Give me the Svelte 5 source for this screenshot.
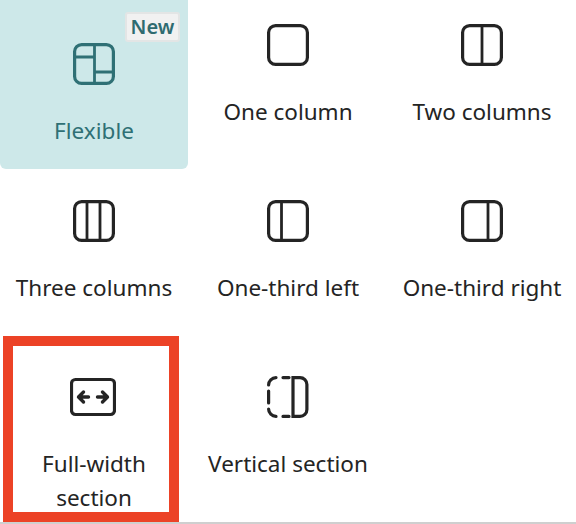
<script>
	const layouts = [
		{ id: 'flexible', label: 'Flexible', active: true },
		{ id: 'one', label: 'One column' },
		{ id: 'two', label: 'Two columns' },
		{ id: 'three', label: 'Three columns' },
		{ id: 'left', label: 'One-third left' },
		{ id: 'right', label: 'One-third right' },
		{ id: 'full', label: 'Full-width section' },
		{ id: 'vertical', label: 'Vertical section' }
	];
</script>

<div class="picker">
	<div class="grid">
		{#each layouts as item}
			<div class="tile" class:active={item.active}>
				{#if item.active}
					<span class="badge">New</span>
				{/if}
				{#if item.id === 'full'}
					<svg class="icon wide" width="46" height="42" viewBox="0 0 46 42">
						<rect x="1.5" y="3.5" width="43" height="35" rx="4" />
						<path class="arrow" d="M18.5 21H8.5M13.5 16L8.5 21l5 5M27.5 21h10M32.5 16L37.5 21l-5 5" />
					</svg>
				{:else if item.id === 'vertical'}
					<svg class="icon" width="42" height="42" viewBox="0 0 42 42">
						<path class="solid" d="M26 1.6H33a6.9 6.9 0 0 1 6.9 6.9v25a6.9 6.9 0 0 1-6.9 6.9h-7z" />
						<path
							class="dash"
							d="M9 1.6A7.4 7.4 0 0 0 1.6 9M1.6 15v12M1.6 33A7.4 7.4 0 0 0 9 40.4M16 1.6h6M16 40.4h6"
						/>
					</svg>
				{:else}
					<svg class="icon" width="42" height="42" viewBox="0 0 42 42">
						<rect x="1.6" y="1.6" width="38.8" height="38.8" rx="7" />
						{#if item.id === 'flexible'}
							<path d="M21.5 1.6v38.8M1.6 14h20M21.5 29h18.9" />
						{:else if item.id === 'two'}
							<path d="M21 1.6v38.8" />
						{:else if item.id === 'three'}
							<path d="M14 1.6v38.8M27 1.6v38.8" />
						{:else if item.id === 'left'}
							<path d="M14.5 1.6v38.8" />
						{:else if item.id === 'right'}
							<path d="M27 1.6v38.8" />
						{/if}
					</svg>
				{/if}
				<span class="label">{item.label}</span>
			</div>
		{/each}
	</div>
	<!-- red annotation drawn over the tile -->
	<div class="highlight"></div>
</div>

<style>
	:global(body) {
		margin: 0;
		background: #fff;
	}

	.picker {
		position: relative;
		width: 576px;
		height: 524px;
		box-sizing: border-box;
		border-bottom: 2px solid #cfcfcf;
		overflow: hidden;
		font-family: 'Noto Sans', 'Open Sans', sans-serif;
	}

	.grid {
		display: grid;
		grid-template-columns: repeat(3, 188px);
		grid-auto-rows: 169px;
		column-gap: 6px;
		row-gap: 7px;
	}

	.tile {
		position: relative;
		display: flex;
		flex-direction: column;
		align-items: center;
		box-sizing: border-box;
		padding-top: 24px;
		color: #242424;
		border-radius: 0 0 6px 6px;
	}

	.tile.active {
		padding-top: 43px;
		color: #2f7075;
		background: #cde8e9;
	}

	.badge {
		position: absolute;
		top: 12px;
		right: 8px;
		width: 55px;
		height: 30px;
		box-sizing: border-box;
		text-align: center;
		font-size: 20px;
		font-weight: 600;
		line-height: 26px;
		color: #2f6b70;
		background: #f1f1f1;
		border: 2px solid #e3e5e5;
		border-radius: 3px;
	}

	.icon {
		display: block;
		fill: none;
		stroke: currentColor;
		stroke-width: 3.2;
	}

	.icon.wide {
		margin-left: -2px;
	}

	.icon path {
		stroke-width: 2.8;
	}

	.icon .solid {
		stroke-width: 3.2;
	}

	.icon .arrow {
		stroke-width: 3.4;
		stroke-linecap: round;
		stroke-linejoin: round;
	}

	.icon .dash {
		stroke-width: 3.2;
		stroke-linecap: round;
	}

	.label {
		margin-top: 29px;
		width: 170px;
		text-align: center;
		font-size: 22.5px;
		line-height: 34px;
	}

	.highlight {
		position: absolute;
		left: 3px;
		top: 336px;
		width: 176px;
		height: 186px;
		box-sizing: border-box;
		border: 10px solid #ec4226;
	}
</style>
